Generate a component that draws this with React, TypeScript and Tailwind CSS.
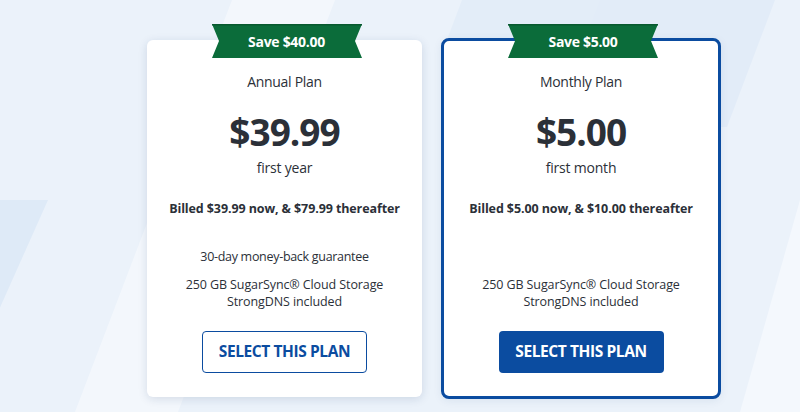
import React from 'react';

type Plan = {
  save: string;
  name: string;
  price: string;
  period: string;
  billed: string;
  guarantee?: string;
  featured?: boolean;
};

const plans: Plan[] = [
  {
    save: 'Save $40.00',
    name: 'Annual Plan',
    price: '$39.99',
    period: 'first year',
    billed: 'Billed $39.99 now, & $79.99 thereafter',
    guarantee: '30-day money-back guarantee',
  },
  {
    save: 'Save $5.00',
    name: 'Monthly Plan',
    price: '$5.00',
    period: 'first month',
    billed: 'Billed $5.00 now, & $10.00 thereafter',
    featured: true,
  },
];

const Ribbon: React.FC<{ label: string; top: string }> = ({ label, top }) => (
  <div className={`absolute left-1/2 ${top} -translate-x-1/2 ml-[2px] w-[150px] h-[34px] flex items-center justify-center`}>
    <svg className="absolute inset-0" width="150" height="34" viewBox="0 0 150 34">
      <polygon points="0,0 150,0 143,17 150,34 0,34 7,17" fill="#0b6c3a" />
      <rect x="0" y="0" width="150" height="1.5" fill="#08592f" />
    </svg>
    <span className="relative text-white font-bold text-[14px] tracking-[-0.3px]">{label}</span>
  </div>
);

const PlanCard: React.FC<{ plan: Plan }> = ({ plan }) => {
  const shell = plan.featured
    ? 'w-[280px] h-[361px] border-[3px] border-[#0b4ca0] rounded-[8px] pt-[31px] shadow-[0_2px_8px_rgba(20,60,120,0.08)]'
    : 'w-[275px] h-[357px] mt-[2px] rounded-[6px] pt-[32px] shadow-[0_2px_10px_rgba(20,50,100,0.14)]';
  return (
    <div className={`relative bg-white flex flex-col items-center text-center text-[#2b3038] ${shell}`}>
      <Ribbon label={plan.save} top={plan.featured ? '-top-[17px]' : '-top-[16px]'} />
      <div className="text-[14px] leading-[20px] tracking-[-0.3px]">{plan.name}</div>
      <div className="mt-[18px] text-[37px] leading-[44px] font-bold tracking-[-1px]">{plan.price}</div>
      <div className="mt-[4px] text-[14px] leading-[20px] tracking-[-0.2px]">{plan.period}</div>
      <div className="mt-[22px] text-[12.5px] leading-[18px] font-bold tracking-[-0.1px]">{plan.billed}</div>
      <div className="mt-[30px] text-[12.5px] leading-[18px] h-[18px] tracking-[-0.3px]">{plan.guarantee ?? ''}</div>
      <div className="mt-[10px] text-[12.5px] leading-[17px] tracking-[-0.1px]">
        250 GB SugarSync® Cloud Storage
        <br />
        StrongDNS included
      </div>
      <button
        className={`mt-[21px] w-[165px] h-[42px] rounded-[4px] text-[15.5px] font-bold tracking-[-0.4px] ${
          plan.featured
            ? 'bg-[#0b4ca0] text-white'
            : 'bg-white text-[#0b4ca0] border-[1.5px] border-[#0b4ca0]'
        }`}
      >
        SELECT THIS PLAN
      </button>
    </div>
  );
};

export default function App() {
  return (
    <div
      className="relative w-full h-[412px] overflow-hidden bg-[#ebf2fa]"
      style={{ fontFamily: '"Open Sans", "Noto Sans", sans-serif' }}
    >
      {/* background wedges */}
      <svg className="absolute inset-0 w-full h-full" viewBox="0 0 800 412" preserveAspectRatio="none">
        <polygon points="232,0 335,0 178,412 75,412" fill="#f3f7fc" />
        <polygon points="-60,200 48,200 -10,330 -60,330" fill="#deeaf7" />
        <polygon points="462,0 638,0 620,45 445,45" fill="#e3edf8" />
        <polygon points="600,0 775,0 727,127 552,127" fill="#e2ecf8" />
        <polygon points="800,200 800,412 740,412" fill="#f4f8fd" />
      </svg>

      <div className="relative flex items-start gap-[19px] pl-[147px] pt-[38px]">
        {plans.map((p) => (
          <PlanCard key={p.name} plan={p} />
        ))}
      </div>
    </div>
  );
}
